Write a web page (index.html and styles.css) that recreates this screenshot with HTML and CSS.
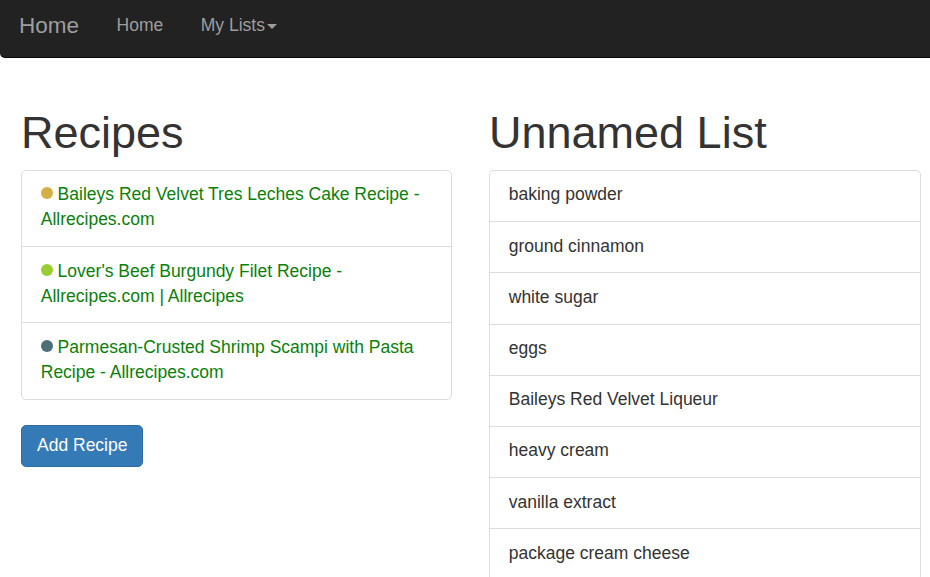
FILE: index.html
```html
<!DOCTYPE html>
<html lang="en">
<head>
<meta charset="utf-8">
<title>Home</title>
<link rel="stylesheet" href="styles.css">
</head>
<body>
<nav class="navbar">
  <a class="brand" href="#">Home</a>
  <ul class="nav">
    <li><a href="#">Home</a></li>
    <li><a href="#">My Lists<span class="caret"></span></a></li>
  </ul>
</nav>
<main class="content">
  <section class="col">
    <h1>Recipes</h1>
    <div class="list-group">
      <div class="list-item"><a class="recipe" href="#"><span class="dot dot-gold"></span> Baileys Red Velvet Tres Leches Cake Recipe - Allrecipes.com</a></div>
      <div class="list-item"><a class="recipe" href="#"><span class="dot dot-lime"></span> Lover's Beef Burgundy Filet Recipe - Allrecipes.com | Allrecipes</a></div>
      <div class="list-item"><a class="recipe" href="#"><span class="dot dot-slate"></span> Parmesan-Crusted Shrimp Scampi with Pasta Recipe - Allrecipes.com</a></div>
    </div>
    <button class="btn-primary" type="button">Add Recipe</button>
  </section>
  <section class="col">
    <h1>Unnamed List</h1>
    <div class="list-group">
      <div class="list-item">baking powder</div>
      <div class="list-item">ground cinnamon</div>
      <div class="list-item">white sugar</div>
      <div class="list-item">eggs</div>
      <div class="list-item">Baileys Red Velvet Liqueur</div>
      <div class="list-item">heavy cream</div>
      <div class="list-item">vanilla extract</div>
      <div class="list-item">package cream cheese</div>
    </div>
  </section>
</main>
</body>
</html>
```
FILE: styles.css
```css
html, body {
  margin: 0;
  padding: 0;
  height: 100%;
  overflow: hidden;
}
body {
  font-family: "Liberation Sans", Arial, sans-serif;
  font-size: 17.5px;
  line-height: 25px;
  color: #333;
  background: #fff;
}
a { text-decoration: none; }

.navbar {
  display: flex;
  align-items: flex-start;
  height: 57px;
  background: #222;
  border-bottom: 1px solid #080808;
  border-bottom-left-radius: 5px;
  box-sizing: content-box;
}
.brand {
  display: block;
  padding: 12.7px 18.75px 0 19px;
  font-size: 22.5px;
  line-height: 25px;
  color: #9d9d9d;
}
.nav {
  display: flex;
  margin: 0;
  padding: 0;
  list-style: none;
}
.nav a {
  display: block;
  padding: 12.7px 18.75px 0;
  line-height: 25px;
  color: #9d9d9d;
}
.caret {
  display: inline-block;
  width: 0;
  height: 0;
  margin-left: 2px;
  vertical-align: middle;
  border-top: 5px solid #9d9d9d;
  border-left: 5px solid transparent;
  border-right: 5px solid transparent;
}

.content {
  display: grid;
  grid-template-columns: 431px 432px;
  column-gap: 37px;
  padding: 50px 0 0 21px;
}
h1 {
  margin: 0 0 12.5px;
  font-size: 45px;
  line-height: 49.5px;
  font-weight: 500;
  color: #333;
}
.list-group {
  margin-bottom: 25px;
}
.list-item {
  padding: 11.4px 18.75px 13.8px;
  border: 1px solid #ddd;
  margin-bottom: -1px;
  background: #fff;
}
.list-item:first-child {
  border-top-left-radius: 5px;
  border-top-right-radius: 5px;
}
.list-item:last-child {
  margin-bottom: 0;
  border-bottom-left-radius: 5px;
  border-bottom-right-radius: 5px;
}
.recipe { color: #0a7f0a; }
.dot {
  display: inline-block;
  width: 12px;
  height: 12px;
  border-radius: 50%;
  vertical-align: 1px;
}
.dot-gold { background: #d4af45; }
.dot-lime { background: #9acd32; }
.dot-slate { background: #4d7077; }

.btn-primary {
  display: inline-block;
  padding: 7.5px 15px;
  font-family: inherit;
  font-size: 17.5px;
  line-height: 25px;
  color: #fff;
  background: #337ab7;
  border: 1px solid #2e6da4;
  border-radius: 5px;
  cursor: pointer;
}
```
